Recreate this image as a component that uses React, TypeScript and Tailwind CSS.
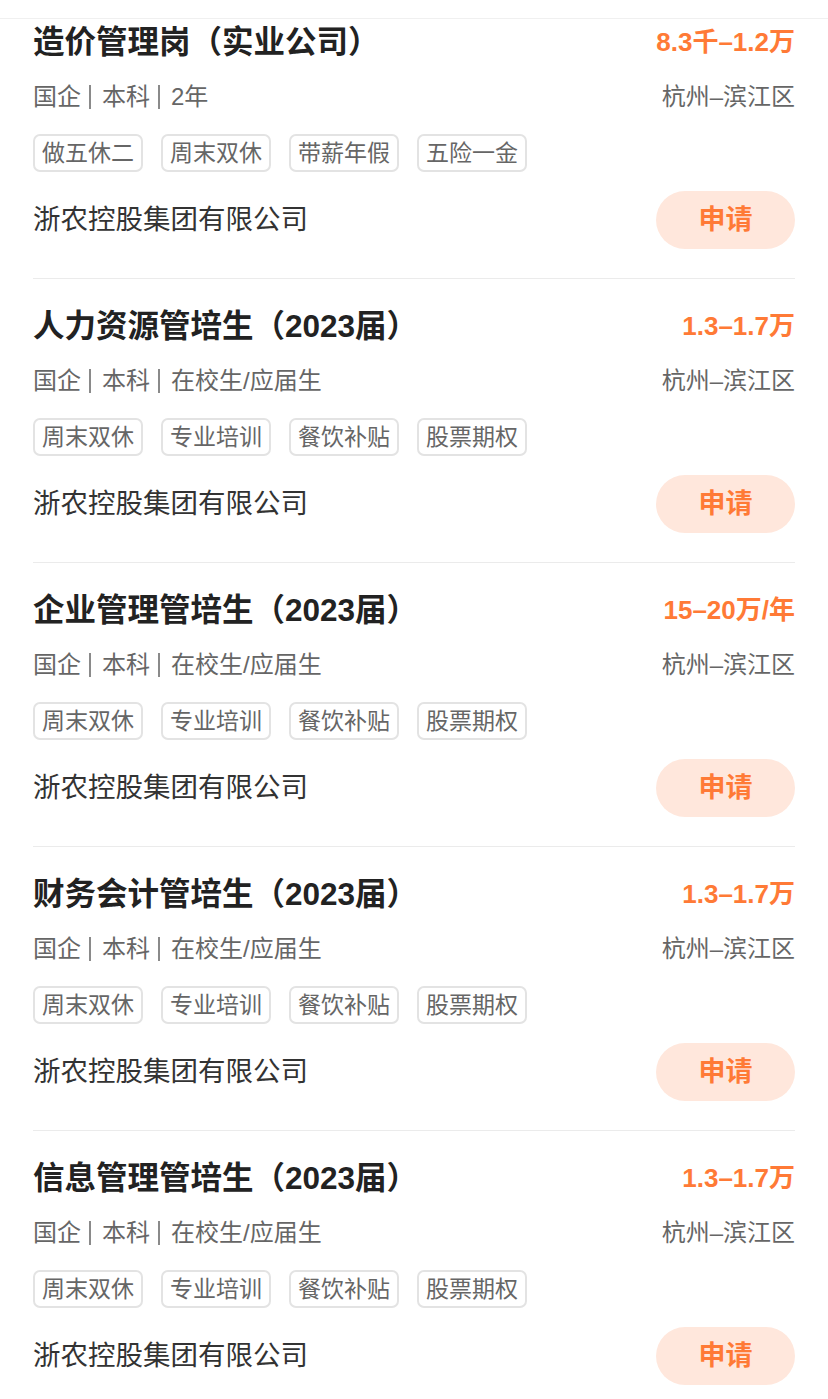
const jobs = [
  {
    title: "造价管理岗（实业公司）",
    salary: "8.3千–1.2万",
    meta: ["国企", "本科", "2年"],
    tags: ["做五休二", "周末双休", "带薪年假", "五险一金"],
  },
  {
    title: "人力资源管培生（2023届）",
    salary: "1.3–1.7万",
    meta: ["国企", "本科", "在校生/应届生"],
    tags: ["周末双休", "专业培训", "餐饮补贴", "股票期权"],
  },
  {
    title: "企业管理管培生（2023届）",
    salary: "15–20万/年",
    meta: ["国企", "本科", "在校生/应届生"],
    tags: ["周末双休", "专业培训", "餐饮补贴", "股票期权"],
  },
  {
    title: "财务会计管培生（2023届）",
    salary: "1.3–1.7万",
    meta: ["国企", "本科", "在校生/应届生"],
    tags: ["周末双休", "专业培训", "餐饮补贴", "股票期权"],
  },
  {
    title: "信息管理管培生（2023届）",
    salary: "1.3–1.7万",
    meta: ["国企", "本科", "在校生/应届生"],
    tags: ["周末双休", "专业培训", "餐饮补贴", "股票期权"],
  },
];

export default function App() {
  return (
    <div
      className="w-[828px] h-[1399px] overflow-hidden bg-white"
      style={{ fontFamily: '"Liberation Sans", "Noto Sans CJK SC", sans-serif' }}
    >
      <div className="h-[19px] border-b border-[#f0f0f0] bg-white" />

      <div className="px-[33px]">
        {jobs.map((job, i) => (
          <div
            key={i}
            className={`border-b border-[#ebebeb] pb-[29px] ${i === 0 ? "pt-[3px]" : "pt-[27px]"}`}
          >
            <div className="flex items-center justify-between h-[40px]">
              <h2 className="text-[31.5px] leading-[40px] font-bold text-[#222]">
                {job.title}
              </h2>
              <span className="text-[26px] leading-[40px] font-semibold text-[#ff7a36]">
                {job.salary}
              </span>
            </div>

            <div className="mt-[20px] flex items-center justify-between h-[30px] text-[24px] leading-[30px] text-[#666]">
              <span className="flex items-center">
                {job.meta.map((m, j) => (
                  <span key={j} className="flex items-center">
                    {j > 0 && (
                      <span className="ml-[8px] mr-[11px] inline-block w-[2px] h-[24px] bg-[#8a8a8a]" />
                    )}
                    {m}
                  </span>
                ))}
              </span>
              <span>杭州–滨江区</span>
            </div>

            <div className="mt-[22px] flex gap-[18px]">
              {job.tags.map((t) => (
                <span
                  key={t}
                  className="h-[38px] w-[110px] flex items-center justify-center rounded-[7px] border-2 border-[#e3e3e3] text-[23px] text-[#666]"
                >
                  {t}
                </span>
              ))}
            </div>

            <div className="mt-[19px] flex items-center justify-between">
              <span className="text-[27.5px] text-[#333]">浙农控股集团有限公司</span>
              <button className="h-[58px] w-[139px] rounded-full bg-[#ffe7dc] text-[27px] font-bold text-[#ff7a36]">
                申请
              </button>
            </div>
          </div>
        ))}
      </div>
    </div>
  );
}
